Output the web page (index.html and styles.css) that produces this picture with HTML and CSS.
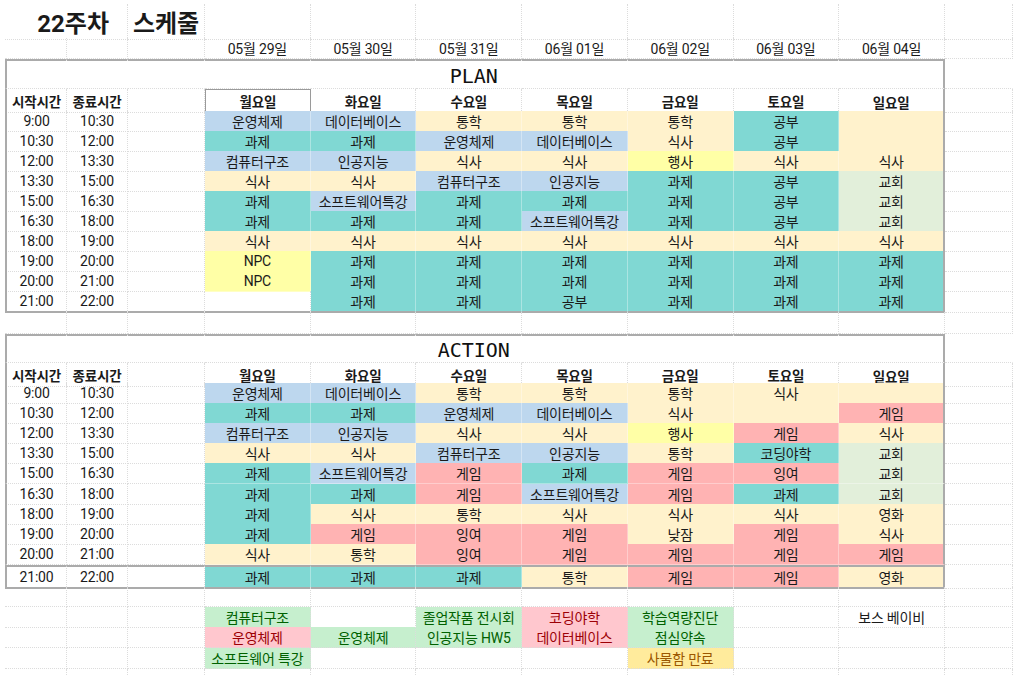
FILE: index.html
```html
<!DOCTYPE html>
<html lang="ko">
<head>
<meta charset="utf-8">
<title>22주차 스케줄</title>
<link rel="stylesheet" href="styles.css">
</head>
<body>
<div class="sheet">
  <div class="row h34">
    <div class="c ttl1">22주차</div><div class="c ttl2">스케줄</div>
    <div class="c"></div><div class="c"></div><div class="c"></div><div class="c"></div><div class="c"></div><div class="c"></div><div class="c"></div><div class="c"></div>
  </div>
  <div class="row h21">
    <div class="c"></div><div class="c"></div><div class="c"></div>
    <div class="c">05월 29일</div><div class="c">05월 30일</div><div class="c">05월 31일</div><div class="c">06월 01일</div><div class="c">06월 02일</div><div class="c">06월 03일</div><div class="c">06월 04일</div><div class="c"></div>
  </div>

  <div class="box">
    <div class="row h30 merged">
      <div class="c"></div><div class="c"></div><div class="c"></div><div class="c"></div><div class="c"></div>
      <div class="c sect">PLAN</div>
      <div class="c"></div><div class="c"></div><div class="c"></div><div class="c"></div><div class="c"></div>
    </div>
    <div class="row h22 head">
      <div class="c">시작시간</div><div class="c">종료시간</div><div class="c"></div>
      <div class="c sel">월요일</div><div class="c">화요일</div><div class="c">수요일</div><div class="c">목요일</div><div class="c">금요일</div><div class="c">토요일</div><div class="c sun">일요일</div><div class="c"></div>
    </div>
    <div class="row">
      <div class="c">9:00</div><div class="c">10:30</div><div class="c"></div>
      <div class="c b">운영체제</div><div class="c b">데이터베이스</div><div class="c y">통학</div><div class="c y">통학</div><div class="c y">통학</div><div class="c t">공부</div><div class="c y"></div><div class="c"></div>
    </div>
    <div class="row">
      <div class="c">10:30</div><div class="c">12:00</div><div class="c"></div>
      <div class="c t">과제</div><div class="c t">과제</div><div class="c b">운영체제</div><div class="c b">데이터베이스</div><div class="c y">식사</div><div class="c t">공부</div><div class="c y"></div><div class="c"></div>
    </div>
    <div class="row">
      <div class="c">12:00</div><div class="c">13:30</div><div class="c"></div>
      <div class="c b">컴퓨터구조</div><div class="c b">인공지능</div><div class="c y">식사</div><div class="c y">식사</div><div class="c p">행사</div><div class="c y">식사</div><div class="c y">식사</div><div class="c"></div>
    </div>
    <div class="row">
      <div class="c">13:30</div><div class="c">15:00</div><div class="c"></div>
      <div class="c y">식사</div><div class="c y">식사</div><div class="c b">컴퓨터구조</div><div class="c b">인공지능</div><div class="c t">과제</div><div class="c t">공부</div><div class="c g">교회</div><div class="c"></div>
    </div>
    <div class="row">
      <div class="c">15:00</div><div class="c">16:30</div><div class="c"></div>
      <div class="c t">과제</div><div class="c b">소프트웨어특강</div><div class="c t">과제</div><div class="c t">과제</div><div class="c t">과제</div><div class="c t">공부</div><div class="c g">교회</div><div class="c"></div>
    </div>
    <div class="row">
      <div class="c">16:30</div><div class="c">18:00</div><div class="c"></div>
      <div class="c t">과제</div><div class="c t">과제</div><div class="c t">과제</div><div class="c b">소프트웨어특강</div><div class="c t">과제</div><div class="c t">공부</div><div class="c g">교회</div><div class="c"></div>
    </div>
    <div class="row">
      <div class="c">18:00</div><div class="c">19:00</div><div class="c"></div>
      <div class="c y">식사</div><div class="c y">식사</div><div class="c y">식사</div><div class="c y">식사</div><div class="c y">식사</div><div class="c y">식사</div><div class="c y">식사</div><div class="c"></div>
    </div>
    <div class="row">
      <div class="c">19:00</div><div class="c">20:00</div><div class="c"></div>
      <div class="c p">NPC</div><div class="c t">과제</div><div class="c t">과제</div><div class="c t">과제</div><div class="c t">과제</div><div class="c t">과제</div><div class="c t">과제</div><div class="c"></div>
    </div>
    <div class="row">
      <div class="c">20:00</div><div class="c">21:00</div><div class="c"></div>
      <div class="c p">NPC</div><div class="c t">과제</div><div class="c t">과제</div><div class="c t">과제</div><div class="c t">과제</div><div class="c t">과제</div><div class="c t">과제</div><div class="c"></div>
    </div>
    <div class="row h21">
      <div class="c">21:00</div><div class="c">22:00</div><div class="c"></div>
      <div class="c"></div><div class="c t">과제</div><div class="c t">과제</div><div class="c t">공부</div><div class="c t">과제</div><div class="c t">과제</div><div class="c t">과제</div><div class="c"></div>
    </div>
  </div>

  <div class="row h22">
    <div class="c"></div><div class="c"></div><div class="c"></div><div class="c"></div><div class="c"></div><div class="c"></div><div class="c"></div><div class="c"></div><div class="c"></div><div class="c"></div><div class="c"></div>
  </div>

  <div class="box">
    <div class="row h29 merged">
      <div class="c"></div><div class="c"></div><div class="c"></div><div class="c"></div><div class="c"></div>
      <div class="c sect">ACTION</div>
      <div class="c"></div><div class="c"></div><div class="c"></div><div class="c"></div><div class="c"></div>
    </div>
    <div class="row head">
      <div class="c">시작시간</div><div class="c">종료시간</div><div class="c"></div>
      <div class="c">월요일</div><div class="c">화요일</div><div class="c">수요일</div><div class="c">목요일</div><div class="c">금요일</div><div class="c">토요일</div><div class="c sun">일요일</div><div class="c"></div>
    </div>
    <div class="row">
      <div class="c">9:00</div><div class="c">10:30</div><div class="c"></div>
      <div class="c b">운영체제</div><div class="c b">데이터베이스</div><div class="c y">통학</div><div class="c y">통학</div><div class="c y">통학</div><div class="c y">식사</div><div class="c y"></div><div class="c"></div>
    </div>
    <div class="row">
      <div class="c">10:30</div><div class="c">12:00</div><div class="c"></div>
      <div class="c t">과제</div><div class="c t">과제</div><div class="c b">운영체제</div><div class="c b">데이터베이스</div><div class="c y">식사</div><div class="c y"></div><div class="c k">게임</div><div class="c"></div>
    </div>
    <div class="row">
      <div class="c">12:00</div><div class="c">13:30</div><div class="c"></div>
      <div class="c b">컴퓨터구조</div><div class="c b">인공지능</div><div class="c y">식사</div><div class="c y">식사</div><div class="c p">행사</div><div class="c k">게임</div><div class="c y">식사</div><div class="c"></div>
    </div>
    <div class="row">
      <div class="c">13:30</div><div class="c">15:00</div><div class="c"></div>
      <div class="c y">식사</div><div class="c y">식사</div><div class="c b">컴퓨터구조</div><div class="c b">인공지능</div><div class="c y">통학</div><div class="c t">코딩야학</div><div class="c g">교회</div><div class="c"></div>
    </div>
    <div class="row h21">
      <div class="c">15:00</div><div class="c">16:30</div><div class="c"></div>
      <div class="c t">과제</div><div class="c b">소프트웨어특강</div><div class="c k">게임</div><div class="c t">과제</div><div class="c k">게임</div><div class="c k">잉여</div><div class="c g">교회</div><div class="c"></div>
    </div>
    <div class="row">
      <div class="c">16:30</div><div class="c">18:00</div><div class="c"></div>
      <div class="c t">과제</div><div class="c t">과제</div><div class="c k">게임</div><div class="c b">소프트웨어특강</div><div class="c k">게임</div><div class="c t">과제</div><div class="c g">교회</div><div class="c"></div>
    </div>
    <div class="row">
      <div class="c">18:00</div><div class="c">19:00</div><div class="c"></div>
      <div class="c t">과제</div><div class="c y">식사</div><div class="c y">통학</div><div class="c y">식사</div><div class="c y">식사</div><div class="c y">식사</div><div class="c y">영화</div><div class="c"></div>
    </div>
    <div class="row">
      <div class="c">19:00</div><div class="c">20:00</div><div class="c"></div>
      <div class="c t">과제</div><div class="c k">게임</div><div class="c k">잉여</div><div class="c k">게임</div><div class="c y">낮잠</div><div class="c k">게임</div><div class="c y">식사</div><div class="c"></div>
    </div>
    <div class="row h21">
      <div class="c">20:00</div><div class="c">21:00</div><div class="c"></div>
      <div class="c y">식사</div><div class="c y">통학</div><div class="c k">잉여</div><div class="c k">게임</div><div class="c k">게임</div><div class="c k">게임</div><div class="c k">게임</div><div class="c"></div>
    </div>
    <div class="row h22 sep">
      <div class="c">21:00</div><div class="c">22:00</div><div class="c"></div>
      <div class="c t">과제</div><div class="c t">과제</div><div class="c t">과제</div><div class="c y">통학</div><div class="c k">게임</div><div class="c k">게임</div><div class="c y">영화</div><div class="c"></div>
    </div>
  </div>

  <div class="row">
    <div class="c"></div><div class="c"></div><div class="c"></div><div class="c"></div><div class="c"></div><div class="c"></div><div class="c"></div><div class="c"></div><div class="c"></div><div class="c"></div><div class="c"></div>
  </div>
  <div class="row">
    <div class="c"></div><div class="c"></div><div class="c"></div>
    <div class="c lg">컴퓨터구조</div><div class="c"></div><div class="c lg">졸업작품 전시회</div><div class="c lb">코딩야학</div><div class="c lg">학습역량진단</div><div class="c"></div><div class="c">보스 베이비</div><div class="c"></div>
  </div>
  <div class="row h21">
    <div class="c"></div><div class="c"></div><div class="c"></div>
    <div class="c lb">운영체제</div><div class="c lg">운영체제</div><div class="c lg">인공지능 HW5</div><div class="c lb">데이터베이스</div><div class="c lg">점심약속</div><div class="c"></div><div class="c"></div><div class="c"></div>
  </div>
  <div class="row h21">
    <div class="c"></div><div class="c"></div><div class="c"></div>
    <div class="c lg">소프트웨어 특강</div><div class="c"></div><div class="c"></div><div class="c"></div><div class="c ln">사물함 만료</div><div class="c"></div><div class="c"></div><div class="c"></div>
  </div>
  <div class="row">
    <div class="c"></div><div class="c"></div><div class="c"></div><div class="c"></div><div class="c"></div><div class="c"></div><div class="c"></div><div class="c"></div><div class="c"></div><div class="c"></div><div class="c"></div>
  </div>
</div>
</body>
</html>
```

FILE: styles.css
```css
* { box-sizing: border-box; }

body {
  margin: 0;
  background: #fff;
  color: #1a1a1a;
  font-family: Roboto, "Noto Sans CJK KR", sans-serif;
  font-size: 14px;
}

.sheet {
  padding: 4px 0 0 5px;
}

.row {
  display: grid;
  grid-template-columns: 62px 61px 77px repeat(7, 105.714px) 1fr;
  height: 20px;
}

.h21 { height: 21px; }
.h22 { height: 22px; }
.h29 { height: 29px; }
.h30 { height: 30px; }
.h34 { height: 34px; }

.c {
  display: flex;
  align-items: center;
  justify-content: center;
  min-width: 0;
  white-space: nowrap;
  letter-spacing: -0.2px;
  border-right: 1px dotted #dcdcdc;
  border-bottom: 1px dotted #dcdcdc;
}

/* title */
.ttl1 {
  grid-column: span 2;
  justify-content: flex-end;
  padding-right: 18px;
  font-size: 24px;
  font-weight: 700;
  letter-spacing: 0;
}
.ttl2 {
  font-size: 24px;
  font-weight: 700;
  letter-spacing: 0;
}

/* section titles */
.merged .c { border-right-color: transparent; }
.sect {
  align-items: flex-end;
  padding-left: 10px;
  font-family: "DejaVu Sans Mono", monospace;
  font-size: 20px;
  letter-spacing: 0;
  color: #111;
}

.head .c { font-weight: 700; font-size: 13.5px; }
.head .sun { padding-top: 3px; }
.sel { border: 1px solid #9a9a9a; }

/* fills */
.b, .t, .y, .p, .g, .k {
  border-right: 1px solid rgba(255, 255, 255, 0.35);
  border-bottom: 1px solid rgba(255, 255, 255, 0.35);
}
.b { background: #bdd7ee; }
.t { background: #80d8d3; }
.y { background: #fff2cc; }
.p { background: #ffffa6; }
.g { background: #e2efda; }
.k { background: #ffb3b3; }

.lg { background: #c6efce; color: #006100; }
.lb { background: #ffc7ce; color: #9c0006; }
.ln { background: #ffeb9c; color: #9c5700; }

/* boxes */
.box .row > .c:first-child { border-left: 2px solid #ababab; }
.box .row > .c:nth-child(10) { border-right: 2px solid #ababab; }
.box .row:first-child > .c:nth-child(-n+10) { border-top: 2px solid #ababab; }
.box .row:last-child > .c:nth-child(-n+10) { border-bottom: 2px solid #ababab; }
.box .sep > .c:nth-child(-n+10) { border-top: 2px solid #ababab; }
```
